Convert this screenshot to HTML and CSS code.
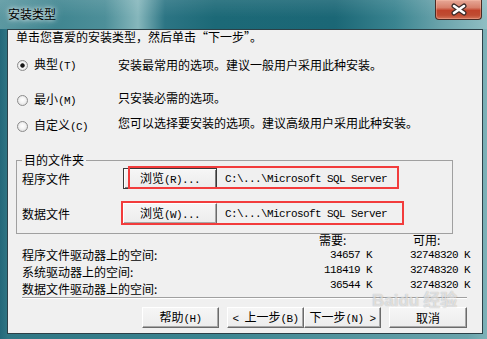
FILE: index.html
```html
<!DOCTYPE html>
<html lang="zh-CN">
<head>
<meta charset="utf-8">
<title>安装类型</title>
<link rel="stylesheet" href="styles.css">
</head>
<body>
<div class="win">
  <div class="titlebar">
    <span class="title">安装类型</span>
    <span class="close">
      <svg width="45" height="19" viewBox="0 0 45 19">
        <path d="M18 6 L28 13 M28 6 L18 13" stroke="#3a2a28" stroke-width="5" stroke-linecap="round"/>
        <path d="M18 6 L28 13 M28 6 L18 13" stroke="#ffffff" stroke-width="2.6" stroke-linecap="round"/>
      </svg>
    </span>
  </div>
  <div class="client">
    <p class="intro">单击您喜爱的安装类型，然后单击“下一步”。</p>
    <div class="options">
      <div class="opt"><span class="radio on"></span><span class="olabel">典型<span class="en">(T)</span></span><span class="odesc">安装最常用的选项。建议一般用户采用此种安装。</span></div>
      <div class="opt opt2"><span class="radio"></span><span class="olabel">最小<span class="en">(M)</span></span><span class="odesc up2">只安装必需的选项。</span></div>
      <div class="opt opt3"><span class="radio"></span><span class="olabel">自定义<span class="en">(C)</span></span><span class="odesc up3">您可以选择要安装的选项。建议高级用户采用此种安装。</span></div>
    </div>
    <fieldset class="dest">
      <legend>目的文件夹</legend>
      <div class="frow">
        <span class="flabel">程序文件</span>
        <span class="pick">
          <button class="btn browse dflt">浏览<span class="en">(R)...</span></button>
          <span class="path en">C:\...\Microsoft SQL Server</span>
          <span class="mark m1"></span>
        </span>
      </div>
      <div class="frow frow2">
        <span class="flabel">数据文件</span>
        <span class="pick">
          <button class="btn browse">浏览<span class="en">(W)...</span></button>
          <span class="path en">C:\...\Microsoft SQL Server</span>
          <span class="mark m2"></span>
        </span>
      </div>
    </fieldset>
    <div class="stats">
      <div class="labels">
        <span>程序文件驱动器上的空间:</span>
        <span>系统驱动器上的空间:</span>
        <span>数据文件驱动器上的空间:</span>
      </div>
      <div class="col col-need">
        <span class="hd">需要:</span>
        <span class="num en">34657 K</span>
        <span class="num en">118419 K</span>
        <span class="num en">36544 K</span>
      </div>
      <div class="col col-avail">
        <span class="hd">可用:</span>
        <span class="num en">32748320 K</span>
        <span class="num en">32748320 K</span>
        <span class="num en">32748320 K</span>
      </div>
    </div>
    <div class="sep"></div>
    <div class="actions">
      <button class="btn act b-help">帮助<span class="en">(H)</span></button>
      <button class="btn act b-back"><span class="en">&lt; </span>上一步<span class="en">(B)</span></button>
      <button class="btn act b-next">下一步<span class="en">(N) &gt;</span></button>
      <button class="btn act b-cancel">取消</button>
    </div>
    <div class="wm">Bai<span class="wm-du">du</span>经验</div>
  </div>
</div>
</body>
</html>
```

FILE: styles.css
```css
html, body {
  margin: 0;
  padding: 0;
}
body {
  width: 487px;
  height: 339px;
  overflow: hidden;
  background: linear-gradient(90deg, #23687a 0px, #2f7684 8px, #3b8591 45%, #6aa4ac 96%, #7db2b8 100%);
  font-family: "Noto Sans CJK SC", sans-serif;
  font-size: 12px;
  color: #000;
}
.win {
  display: flex;
  flex-direction: column;
  height: 339px;
}
.titlebar {
  height: 29px;
  flex: none;
  display: flex;
  justify-content: space-between;
  align-items: flex-start;
  background:
    linear-gradient(180deg, rgba(255,255,255,0.10), rgba(255,255,255,0) 60%),
    linear-gradient(90deg, #5c98a1 0px, #3f8590 55px, #4d8f99 105px, #86b7bc 138px, #2c7584 165px, #1c6977 215px, #1b6776 335px, #3a8490 395px, #6aa3ab 440px, #8fbec3 487px);
}
.title {
  margin: 6px 0 0 8px;
  line-height: 16px;
  text-shadow: 0 0 4px #fff, 0 0 8px rgba(255,255,255,0.8);
}
.close {
  width: 47px;
  height: 20px;
  margin-right: 5px;
  box-sizing: border-box;
  border: 1px solid #4a2a24;
  border-top: none;
  border-radius: 0 0 4px 4px;
  background: linear-gradient(180deg, #e7a897 0%, #d7806b 40%, #c0432b 55%, #bf4c32 80%, #d37459 100%);
  box-shadow: inset 0 0 0 1px rgba(255,200,180,0.35);
  display: flex;
}
.client {
  position: relative;
  margin: 0 4px 0 7px;
  height: 305px;
  box-sizing: border-box;
  border: 1px solid #2c4047;
  background: #f0f0f0;
}
.intro {
  margin: 0;
  padding-left: 8px;
  height: 14px;
  line-height: 14px;
}
.en {
  font-family: "Liberation Mono", monospace;
  font-size: 11px;
  letter-spacing: -0.6px;
}
.options {
  margin-top: 13px;
  padding-left: 9px;
}
.opt {
  display: flex;
  align-items: center;
  height: 16px;
  line-height: 16px;
}
.opt2 { margin-top: 19px; }
.opt3 { margin-top: 10px; }
.radio {
  flex: none;
  width: 11px;
  height: 11px;
  box-sizing: border-box;
  border: 1px solid #8c8c8c;
  border-radius: 50%;
  background: radial-gradient(circle at 50% 45%, #ffffff 0, #f4f4f4 40%, #d6d6d6 100%);
  margin-right: 6px;
}
.radio.on {
  background: radial-gradient(circle at 50% 50%, #161616 0, #161616 1.8px, #f8f8f8 2.6px, #d8d8d8 100%);
}
.olabel {
  width: 84px;
  flex: none;
}
.up2 { margin-top: -4px; }
.up3 { margin-top: -6px; }
.dest {
  margin: 18px 29px 0 8px;
  padding: 0 0 9px 5px;
  border: 1px solid #a0a0a0;
  min-width: 0;
}
.dest legend {
  padding: 0 2px;
  line-height: 16px;
}
.frow {
  display: flex;
  align-items: center;
  height: 21px;
}
.frow2 { margin-top: 14px; }
.flabel {
  width: 101px;
  flex: none;
}
.pick {
  position: relative;
  display: flex;
  align-items: center;
  height: 21px;
}
.btn {
  font-family: "Noto Sans CJK SC", sans-serif;
  font-size: 12px;
  color: #000;
  padding: 0;
  margin: 0;
  box-sizing: border-box;
  background: linear-gradient(180deg, #f6f6f6, #ececec);
  border: 1px solid;
  border-color: #ffffff #6b6b6b #6b6b6b #ffffff;
  box-shadow: inset -1px -1px 0 #a8a8a8;
  border-radius: 0;
  line-height: 17px;
  white-space: nowrap;
}
.browse {
  width: 94px;
  height: 21px;
}
.browse.dflt {
  border-color: #3a3a3a;
  box-shadow: inset 1px 1px 0 #ffffff, inset -1px -1px 0 #7a7a7a;
}
.path {
  margin-left: 8px;
  line-height: 16px;
}
.mark {
  position: absolute;
  box-sizing: border-box;
  border: 2px solid #f23c3c;
}
.m1 { left: 5px; top: -2px; width: 271px; height: 23px; }
.m2 { left: -2px; top: -2px; width: 283px; height: 24px; }
.stats {
  margin-left: 14px;
  display: flex;
  height: 63px;
}
.labels {
  width: 278px;
  padding-top: 12px;
  display: flex;
  flex-direction: column;
}
.labels span {
  height: 17px;
  line-height: 17px;
}
.col {
  display: flex;
  flex-direction: column;
  align-items: flex-end;
}
.col-need { width: 72px; }
.col-avail { width: 98px; }
.col .hd {
  height: 12px;
  line-height: 12px;
  margin-bottom: 2px;
  align-self: flex-start;
}
.col-need .hd { padding-left: 19px; }
.col-avail .hd { padding-left: 41px; }
.col .num {
  height: 15px;
  line-height: 15px;
}
.sep {
  margin: 0 15px 0 14px;
  height: 1px;
  background: #a0a0a0;
  border-bottom: 1px solid #ffffff;
}
.actions {
  display: flex;
  justify-content: flex-end;
  margin-top: 8px;
  padding-right: 15px;
}
.act { height: 21px; }
.b-help { width: 77px; margin-right: 8px; }
.b-back { width: 77px; }
.b-next { width: 77px; margin-right: 8px; }
.b-cancel { width: 78px; }
.wm {
  position: absolute;
  left: 364px;
  top: 262px;
  color: rgba(255,255,255,0.6);
  text-shadow: 0 0 1px rgba(0,0,0,0.3);
  pointer-events: none;
  font-family: "Liberation Sans", "Noto Sans CJK SC", sans-serif;
  font-size: 17px;
  font-weight: bold;
  line-height: 18px;
}
.wm-du {
  margin-right: 4px;
}
```
